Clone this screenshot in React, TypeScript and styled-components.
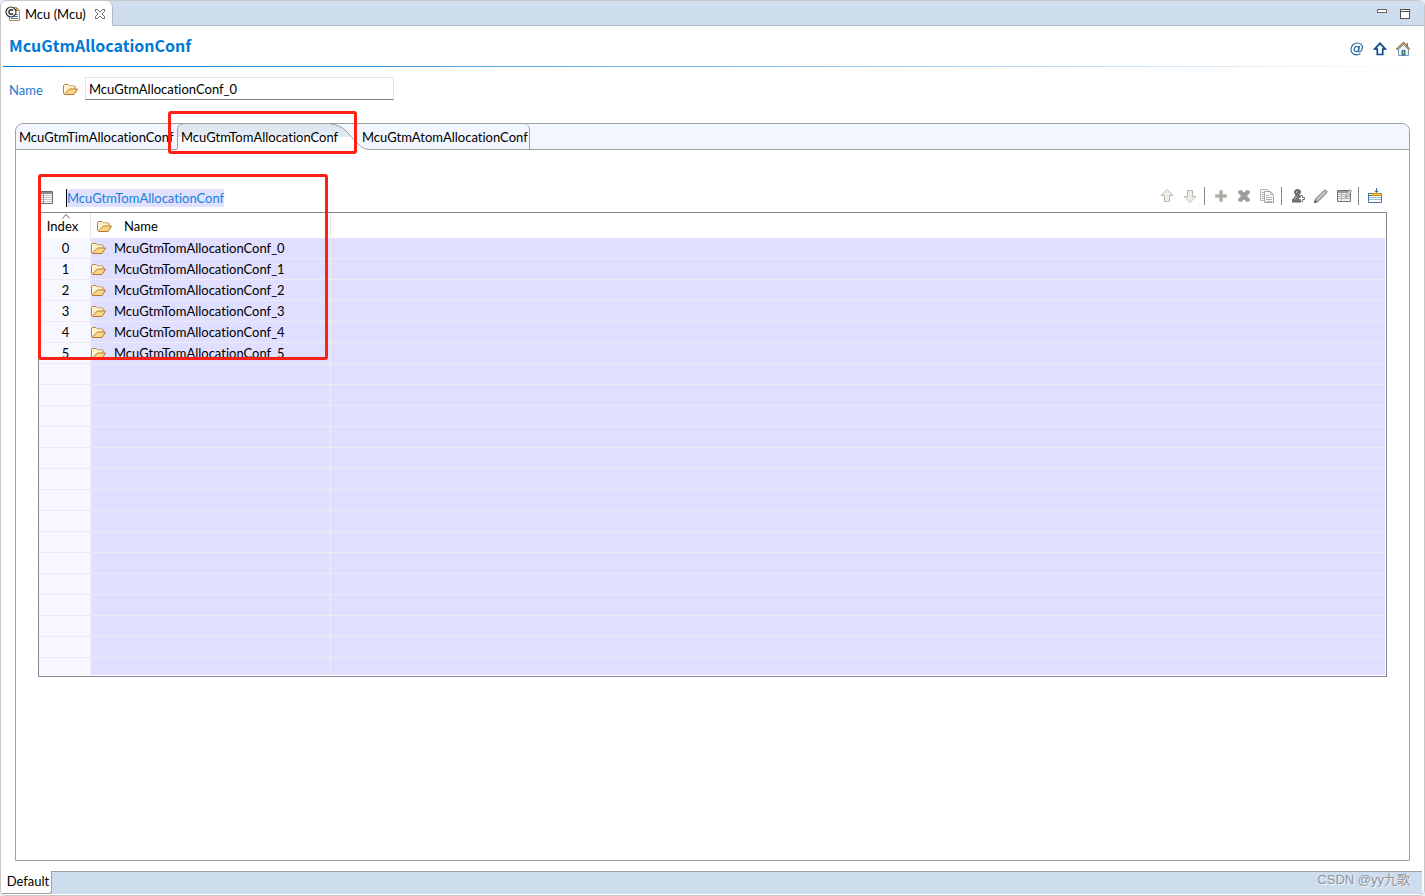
import React from 'react';
import styled, { createGlobalStyle, css } from 'styled-components';

const GlobalStyle = createGlobalStyle`
  *, *::before, *::after { box-sizing: border-box; }
  body {
    margin: 0;
    background: #e9effa;
    font: 13px/18px Lato, "Noto Sans CJK SC", sans-serif;
    font-variant-ligatures: none;
    color: #000;
  }
  button, input { font: inherit; font-variant-ligatures: inherit; color: inherit; }
`;

const Frame = styled.div`
  display: flex;
  flex-direction: column;
  min-height: 100vh;
  background: #fff;
  border: 1px solid #c8c8c8;
  border-radius: 6px;
  overflow: hidden;
`;

const EditorBar = styled.header`
  display: flex;
  justify-content: space-between;
  height: 25px;
  background: linear-gradient(#cfdfee, #cddcec);
  border-bottom: 1px solid #b4b9c8;
`;

const EditorTab = styled.div`
  display: flex;
  align-items: center;
  gap: 4px;
  width: 112px;
  height: 25px;
  padding: 0 4px;
  background: #fff;
  border-right: 1px solid #b4b9c8;
  border-top-right-radius: 6px;
`;

const IconButton = styled.button`
  display: flex;
  align-items: center;
  justify-content: center;
  width: 23px;
  height: 24px;
  padding: 0;
  border: 0;
  background: none;
`;

const CloseButton = styled(IconButton)`
  width: 16px;
  height: 16px;
  margin-left: auto;
`;

const ButtonRow = styled.div`
  display: flex;
  align-items: center;
`;

const WindowButtons = styled(ButtonRow)`
  padding-right: 8px;
`;

const TitleRow = styled.div`
  display: flex;
  justify-content: space-between;
  align-items: center;
  height: 40px;
  padding: 0 10px 0 8px;
`;

const Title = styled.h1`
  margin: 0;
  padding-bottom: 2px;
  font: 700 16px/20px "Noto Sans CJK SC", sans-serif;
  color: #0078d7;
`;

const HeaderButtons = styled(ButtonRow)`
  padding-top: 5px;
`;

const Rule = styled.div`
  height: 1px;
  margin: 0 2px;
  background: linear-gradient(90deg, #0078d7, #fff);
`;

const NameRow = styled.div`
  display: flex;
  align-items: center;
  height: 24px;
  margin: 10px 8px 0;
`;

const NameLabel = styled.label`
  width: 54px;
  padding-top: 2px;
  color: #1a7bd0;
`;

const NameInput = styled.input`
  width: 309px;
  height: 23px;
  margin: 0 0 1px 6px;
  padding: 0 3px;
  border: 1px solid #e3e3e3;
  border-bottom-color: #7a7a7a;
  outline: 0;
  background: #fff;
`;

const Panel = styled.main`
  flex: 1;
  display: flex;
  flex-direction: column;
  margin: 22px 14px 10px;
  border: 1px solid #a0a0a0;
  border-radius: 8px 8px 0 0;
`;

const TabStrip = styled.div`
  display: flex;
  height: 26px;
  background: #f2f6fe;
  border-bottom: 1px solid #a0a0a0;
  border-radius: 8px 8px 0 0;
`;

const Tab = styled.button<{ $width: number; $last?: boolean }>`
  position: relative;
  width: ${(p) => p.$width}px;
  height: 25px;
  padding: 0 0 0 3px;
  border: 0;
  background: none;
  text-align: left;
  white-space: nowrap;
  ${(p) =>
    p.$last &&
    css`
      border-right: 1px solid #a0a0a0;
      border-top-right-radius: 6px;
    `}
`;

const TabShape = styled.svg`
  position: absolute;
  left: -1px;
  top: 0;
`;

const TabText = styled.span`
  position: relative;
`;

const Highlight = styled.div`
  position: absolute;
  z-index: 2;
  border: 3px solid #ff1f14;
  border-radius: 3px;
  pointer-events: none;
`;

const TabHighlight = styled(Highlight)`
  inset: -13px 2px -5px -10px;
`;

const ListHighlight = styled(Highlight)`
  left: 0;
  top: -10px;
  width: 290px;
  height: 186px;
`;

const Section = styled.section`
  position: relative;
  margin: 34px 22px 0;
`;

const SectionHeader = styled.div`
  display: flex;
  justify-content: space-between;
  align-items: center;
  height: 24px;
  margin-bottom: 4px;
  padding-right: 1px;
`;

const SectionLabel = styled.div`
  display: flex;
  align-items: center;
  gap: 12px;
  padding-top: 4px;
`;

const LabelText = styled.span`
  border-left: 1px solid #000;
  background: #e0e0ff;
  color: #1a80dc;
`;

const Separator = styled.span`
  width: 1px;
  height: 18px;
  margin: 0 4px 0 3px;
  background: #8a8a8a;
`;

const TableBox = styled.div`
  height: 465px;
  padding: 0 1px 1px 0;
  border: 1px solid #828790;
  background: #fff;
`;

const TableClip = styled.div`
  height: 100%;
  overflow: hidden;
`;

const Grid = styled.table`
  width: 100%;
  table-layout: fixed;
  border-collapse: separate;
  border-spacing: 0;
`;

const Head = styled.th`
  position: relative;
  height: 25px;
  padding: 0;
  font-weight: 400;
  text-align: left;
  border-right: 1px solid #e5e5e5;
  &:first-child { text-align: center; padding-right: 4px; }
  &:last-child { border-right: 0; }
`;

const SortMark = styled.svg`
  position: absolute;
  left: 23px;
  top: 1px;
`;

const Cell = styled.td`
  height: 21px;
  padding: 0;
  background: #e0dfff;
  border-right: 1px solid #ececf2;
  border-bottom: 1px solid #ececf2;
  line-height: 20px;
  &:first-child { background: #f7f7ff; text-align: center; padding-left: 2px; }
  &:last-child { border-right: 0; }
`;

const WithIcon = styled.div<{ $head?: boolean }>`
  display: flex;
  align-items: center;
  gap: ${(p) => (p.$head ? 11 : 7)}px;
  padding-left: ${(p) => (p.$head ? 6 : 0)}px;
`;

const PageBar = styled.footer`
  display: flex;
  justify-content: space-between;
  height: 23px;
  margin: 0 2px 1px 1px;
  background: #cedded;
`;

const PageTab = styled.button`
  width: 50px;
  padding: 0 0 2px 3px;
  border: 1px solid #a0a0a0;
  border-width: 0 1px 1px 0;
  border-radius: 0 0 3px 0;
  background: #fff;
`;

const PageFill = styled.div`
  flex: 1;
  display: flex;
  justify-content: flex-end;
  padding-right: 12px;
  border-top: 1px solid #a0a0a0;
`;

const Watermark = styled.span`
  font: 13px/16px "Liberation Sans", "Noto Sans CJK SC", sans-serif;
  color: #8d959e;
  text-shadow: 1px 1px 0 #eef3f8;
`;

type IconProps = { size?: number; children: React.ReactNode };
const Icon = ({ size = 16, children }: IconProps) => (
  <svg width={size} height={size} viewBox={`0 0 ${size} ${size}`} fill="none" aria-hidden="true">
    {children}
  </svg>
);

const FolderIcon = () => (
  <Icon>
    <path d="M.5 12V4.500L2 3.500h3l1.500 1.500h5l.5.500v2" fill="#fdf0c4" stroke="#bd7f33" />
    <path d="M1 13.500 5 9.500l1-1 9-.5-3.500 5.500z" fill="#f8d888" />
    <path d="M1.500 11.500V5L2.500 4.500H5l1 1.500h5" stroke="#fffbe6" />
    <path d="M.5 12 1.500 13.500h9.500L14.500 8H6.500L4.500 10 2 12.500" stroke="#b8762b" />
  </Icon>
);

const McuIcon = () => (
  <Icon>
    <path d="M4.500 1.500h7l3 3v10h-10z" fill="#fff" stroke="#a48b4e" />
    <path d="M11.500 1.500v3h3z" fill="#e8c878" stroke="#a48b4e" />
    <path d="M6 12.500h7M9 10.500h4M11 8.500h2" stroke="#4c79b8" />
    <circle cx="6" cy="6" r="5" fill="#f4f4f4" stroke="#333" strokeWidth="1.200" />
    <path d="M8 4.500C6.500 3 4 3.800 4 6s2.500 3 4 1.500" stroke="#222" strokeWidth="1.500" />
  </Icon>
);

const CloseIcon = () => (
  <Icon>
    <path
      d="M3.500 3.500h2L8 6l2.500-2.500h2v2L10 8l2.500 2.500v2h-2L8 10l-2.500 2.500h-2v-2L6 8 3.500 5.500z"
      stroke="#6c6c6c"
      fill="#fff"
    />
  </Icon>
);

const MinimizeIcon = () => (
  <Icon>
    <rect x="3.500" y="4.500" width="9" height="3" fill="#fff" stroke="#666" />
  </Icon>
);

const MaximizeIcon = () => (
  <Icon>
    <rect x="3.500" y="4.500" width="9" height="9" fill="#fff" stroke="#555" />
    <path d="M3 6.500h10" stroke="#555" />
  </Icon>
);

const AtIcon = () => (
  <Icon>
    <ellipse cx="7.500" cy="8" rx="2.200" ry="2.700" transform="rotate(20 7.500 8)" stroke="#2f6f9f" strokeWidth="1.200" />
    <path
      d="M10.500 5 9.600 9.500c-.2 1.500 1.500 1.600 2.700.1C15 5.500 12.500 2 8.500 2 5 2 2 4.700 2 8.300c0 5.200 5.500 6.900 9.500 4.200"
      stroke="#2f6f9f"
      strokeWidth="1.200"
    />
  </Icon>
);

const UpIcon = () => (
  <Icon>
    <path d="M8 2.300 13.300 8H10.700v5.500H5.300V8H2.700z" stroke="#0a4790" strokeWidth="1.700" fill="#fff" />
  </Icon>
);

const HomeIcon = () => (
  <Icon>
    <path d="M3.500 8v6.500h10V8L8.500 3.500z" fill="#e8f1fa" stroke="#7898b8" />
    <path d="M11.500 2h1.500v4h-1.500z" fill="#9b6b5d" />
    <path d="M1.500 8.500 8.500 2l6 6.500" stroke="#9a7d56" strokeWidth="2" />
    <path d="M3 7.500 8.500 2.500l5 5" stroke="#e0c69a" strokeWidth="1" strokeDasharray="1 1" />
    <path d="M7 9.500h3V14H7z" fill="#5a9b3c" stroke="#3b6fa0" />
    <path d="M8 10.500h1v2H8z" fill="#f0d060" />
  </Icon>
);

const ListIcon = () => (
  <Icon>
    <path d="M2.500 1.500h12v12h-12z" fill="#fff" stroke="#6a6a6a" />
    <path d="M3 2.500h11M3 3.500h11" stroke="#8b8b8b" />
    <path d="M3 5.500h11M3 7.500h11M3 9.500h11M3 11.500h11" stroke="#c2c2c2" />
    <path d="M5.500 4v9" stroke="#9a9a9a" />
  </Icon>
);

const ArrowIcon = ({ down }: { down?: boolean }) => (
  <Icon>
    <path
      d={down ? 'M8 14.500 2.500 9V8.500h3v-6h5v6h3V9z' : 'M8 1.500 13.500 7v.5h-3v6h-5v-6h-3V7z'}
      fill="#eeeee6"
      stroke="#b9b8b0"
      strokeLinejoin="round"
    />
  </Icon>
);

const PlusIcon = () => (
  <Icon>
    <path d="M6.500 2.500h3v4h4v3h-4v4h-3v-4h-4v-3h4z" fill="#b5b8ae" stroke="#c2c5bd" />
    <path d="M7 4h2v3h3v2H9v3H7V9H4V7h3z" fill="#a7aa9f" />
  </Icon>
);

const DeleteIcon = () => (
  <Icon>
    <path
      d="M2.500 3.500 4 2.500h1.500L8 5l2.500-2.500H12l1.500 1v1.500L10.500 8l3 3v1.500l-1.500 1h-1.500L8 11l-2.500 2.500H4l-1.500-1V11l3-3-3-3z"
      fill="#9c9c9c"
      stroke="#a9a9a9"
    />
  </Icon>
);

const CopyIcon = () => (
  <Icon>
    <path d="M1.500 1.500h7l2 2v9h-9z" fill="#f7f7f7" stroke="#b5b5b5" />
    <path d="M3 4.500h2M3 6.500h2M3 8.500h2M3 10.500h2" stroke="#b5b5b5" />
    <path d="M5.500 3.500h6l3 3v8h-9z" fill="#fafafa" stroke="#a8a8a8" />
    <path d="M11.500 3.500v3h3M7 7.500h3M7 9.500h6M7 11.500h6M7 13.500h6" stroke="#b5b5b5" />
  </Icon>
);

const PersonIcon = () => (
  <Icon>
    <path d="M7.500 1.500c2 0 3 1 3 2.500 0 1-.7 1.800-1.500 2.500l1 3.500 1 1.500v2.500H2.500v-2.500l2-1.500L6 7C5 6 4.500 5 4.500 4c0-1.500 1-2.500 3-2.500z" fill="#747474" stroke="#636363" />
    <path d="M6.500 3v2M6.500 8 5 11.500" stroke="#b0b0b0" />
    <path d="M10.500 7.500h2v2h2v2h-2v2h-2v-2h-2v-2h2z" fill="#fff" stroke="#777" />
  </Icon>
);

const PencilIcon = () => (
  <Icon>
    <path d="m1.500 14.500 1-3.500 8.500-8.500 1.500-.5 1.500 1.500-.5 1.500L5 13.500z" fill="#b6b6b6" stroke="#767676" strokeLinejoin="round" />
    <path d="m4 11.500 8-8" stroke="#e4e4e4" />
    <path d="m1 15 1-3 2 2z" fill="#555" />
  </Icon>
);

const TableEditIcon = () => (
  <Icon>
    <path d="M1.500 2.500h13v11h-13z" fill="#f1eff3" stroke="#77727a" />
    <path d="M2 3.500h12M2 4.500h12" stroke="#9d97a0" />
    <path d="M2 6.500h12M2 8.500h12M2 10.500h12M5.500 5v8" stroke="#b9b3bd" />
    <path d="m9.500 9.500.5-2.500 4-5.500 1.500 1.500-3.500 5.500z" fill="#e5e0d8" stroke="#99948e" />
  </Icon>
);

const InsertIcon = () => (
  <Icon>
    <path d="M1.500 5.500h13v9h-13z" fill="#fff" stroke="#4a70a5" />
    <path d="M2 9.500h12M2 11.500h12" stroke="#9fc0df" />
    <path d="M1 5.500h14M1 7.500h4" stroke="#4a70a5" />
    <path d="M5.500 5.500h9v2h-9z" fill="#ffdc70" stroke="#c88400" />
    <path d="M9.500 0v4M7.500 2.500l2 2 2-2" stroke="#46698a" />
  </Icon>
);

const entries = [0, 1, 2, 3, 4, 5].map((n) => `McuGtmTomAllocationConf_${n}`);
const ROW_COUNT = 21;

export default function App() {
  return (
    <>
      <GlobalStyle />
      <Frame>
        <EditorBar>
          <EditorTab>
            <McuIcon />
            <span>Mcu (Mcu)</span>
            <CloseButton aria-label="Close"><CloseIcon /></CloseButton>
          </EditorTab>
          <WindowButtons>
            <IconButton aria-label="Minimize"><MinimizeIcon /></IconButton>
            <IconButton aria-label="Maximize"><MaximizeIcon /></IconButton>
          </WindowButtons>
        </EditorBar>

        <TitleRow>
          <Title>McuGtmAllocationConf</Title>
          <HeaderButtons>
            <IconButton aria-label="Annotations"><AtIcon /></IconButton>
            <IconButton aria-label="Up"><UpIcon /></IconButton>
            <IconButton aria-label="Home"><HomeIcon /></IconButton>
          </HeaderButtons>
        </TitleRow>
        <Rule />

        <NameRow>
          <NameLabel htmlFor="conf-name">Name</NameLabel>
          <FolderIcon />
          <NameInput id="conf-name" defaultValue="McuGtmAllocationConf_0" />
        </NameRow>

        <Panel>
          <TabStrip role="tablist">
            <Tab role="tab" aria-selected={false} $width={162}>McuGtmTimAllocationConf</Tab>
            <Tab role="tab" aria-selected $width={181}>
              <TabShape width="196" height="26" viewBox="0 0 196 26" fill="none">
                <defs>
                  <linearGradient id="tab-fill" x1="0" y1="0" x2="0" y2="1">
                    <stop offset="0" stopColor="#dbe4ee" />
                    <stop offset=".5" stopColor="#e4ebf4" />
                    <stop offset=".5" stopColor="#fff" />
                  </linearGradient>
                </defs>
                <path d="M0 26V6Q1 0 6 0H154C167 1 173 12 179 18S187 25 193 25.500V26z" fill="url(#tab-fill)" />
                <path d="M.5 25V5Q1 0 6 0M154 0C167 1 173 12 179 18S187 25 193 25.500" stroke="#a0a0a0" />
              </TabShape>
              <TabText>McuGtmTomAllocationConf</TabText>
              <TabHighlight />
            </Tab>
            <Tab role="tab" aria-selected={false} $width={171} $last>McuGtmAtomAllocationConf</Tab>
          </TabStrip>

          <Section>
            <SectionHeader>
              <SectionLabel>
                <ListIcon />
                <LabelText>McuGtmTomAllocationConf</LabelText>
              </SectionLabel>
              <ButtonRow>
                <IconButton aria-label="Move up"><ArrowIcon /></IconButton>
                <IconButton aria-label="Move down"><ArrowIcon down /></IconButton>
                <Separator />
                <IconButton aria-label="Add"><PlusIcon /></IconButton>
                <IconButton aria-label="Delete"><DeleteIcon /></IconButton>
                <IconButton aria-label="Duplicate"><CopyIcon /></IconButton>
                <Separator />
                <IconButton aria-label="Add user entry"><PersonIcon /></IconButton>
                <IconButton aria-label="Edit"><PencilIcon /></IconButton>
                <IconButton aria-label="Edit table"><TableEditIcon /></IconButton>
                <Separator />
                <IconButton aria-label="Insert column"><InsertIcon /></IconButton>
              </ButtonRow>
            </SectionHeader>
            <TableBox>
              <TableClip>
                <Grid>
                  <colgroup>
                    <col width="52" />
                    <col width="240" />
                    <col />
                  </colgroup>
                  <thead>
                    <tr>
                      <Head>
                        Index
                        <SortMark width="8" height="5" viewBox="0 0 8 5" fill="none">
                          <path d="m.5 4.500 3.500-4 3.500 4" stroke="#666" />
                        </SortMark>
                      </Head>
                      <Head><WithIcon $head><FolderIcon />Name</WithIcon></Head>
                      <Head />
                    </tr>
                  </thead>
                  <tbody>
                    {Array.from({ length: ROW_COUNT }, (_, i) => (
                      <tr key={i}>
                        <Cell>{i < entries.length ? i : null}</Cell>
                        <Cell>
                          {i < entries.length && <WithIcon><FolderIcon />{entries[i]}</WithIcon>}
                        </Cell>
                        <Cell />
                      </tr>
                    ))}
                  </tbody>
                </Grid>
              </TableClip>
            </TableBox>
            <ListHighlight />
          </Section>
        </Panel>

        <PageBar>
          <PageTab>Default</PageTab>
          <PageFill><Watermark>CSDN @yy九歌</Watermark></PageFill>
        </PageBar>
      </Frame>
    </>
  );
}
